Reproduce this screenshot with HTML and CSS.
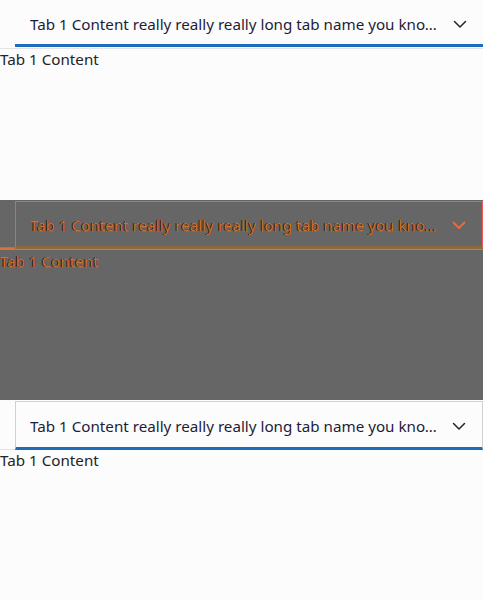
FILE: index.html
```html
<!DOCTYPE html>
<html>
<head>
<meta charset="utf-8">
<link rel="stylesheet" href="styles.css">
</head>
<body>
  <section class="panel">
    <div class="header">
      <div class="tab">
        <span class="label">Tab 1 Content really really really long tab name you know it is long</span>
        <svg class="chev" width="20" height="20" viewBox="0 0 20 20"><path d="M4.5 7.5 L10 13 L15.5 7.5" fill="none" stroke="currentColor" stroke-width="1.5" stroke-linecap="round" stroke-linejoin="round"/></svg>
      </div>
    </div>
    <div class="content">Tab 1 Content</div>
  </section>

  <section class="panel panel-diff">
    <div class="header header-boxed">
      <div class="tab tab-boxed">
        <span class="label">Tab 1 Content really really really long tab name you know it is long</span>
        <svg class="chev" width="20" height="20" viewBox="0 0 20 20"><path d="M4.5 7.5 L10 13 L15.5 7.5" fill="none" stroke="currentColor" stroke-width="1.8" stroke-linecap="round" stroke-linejoin="round"/></svg>
      </div>
    </div>
    <div class="content">Tab 1 Content</div>
  </section>

  <section class="panel">
    <div class="header header-boxed">
      <div class="tab tab-boxed">
        <span class="label">Tab 1 Content really really really long tab name you know it is long</span>
        <svg class="chev" width="20" height="20" viewBox="0 0 20 20"><path d="M4.5 7.5 L10 13 L15.5 7.5" fill="none" stroke="currentColor" stroke-width="1.5" stroke-linecap="round" stroke-linejoin="round"/></svg>
      </div>
    </div>
    <div class="content">Tab 1 Content</div>
  </section>
</body>
</html>
```

FILE: styles.css
```css
html, body {
  margin: 0;
  padding: 0;
  background: #fcfcfc;
}

body {
  font-family: "Noto Sans", "Open Sans", sans-serif;
  font-size: 15.2px;
  color: #242424;
}

.panel {
  height: 200px;
  display: flex;
  flex-direction: column;
  overflow: hidden;
  background: #fcfcfc;
}

.header {
  height: 48px;
  border-bottom: 1px solid #e3e3e3;
  display: flex;
  align-items: flex-start;
}

.header-boxed {
  height: 49px;
}

.tab {
  margin-left: 15px;
  flex: 1;
  min-width: 0;
  height: 47px;
  box-sizing: border-box;
  border-bottom: 3px solid #1f6cb8;
  display: flex;
  align-items: center;
  padding: 3px 13px 0 15px;
  color: #1c1c3a;
}

.tab-boxed {
  margin-top: 1px;
  height: 49px;
  border: 1px solid #d1d1d1;
  border-bottom: 3px solid #1f6cb8;
  padding-left: 14px;
  padding-top: 2px;
}

.label {
  flex: 1;
  min-width: 0;
  white-space: nowrap;
  overflow: hidden;
  text-overflow: ellipsis;
  line-height: 20px;
}

.chev {
  flex: none;
  margin-left: 9px;
  color: #242424;
}

.content {
  line-height: 21px;
  color: #242424;
}

/* diff overlay panel */
.panel-diff {
  background: #666666;
}

.panel-diff .header {
  height: 47px;
  border-bottom: 1px solid #e05a4a;
  box-shadow: 0 2px 0 0 #d9743f;
}

.panel-diff .tab-boxed {
  height: 48px;
  border: 1px solid #f05a50;
  border-bottom: 3px solid #8c6a3c;
}

.panel-diff .label,
.panel-diff .content {
  color: #c8742f;
  text-shadow: -1px 0 0 #26221e, 0.5px 0 0 rgba(40, 30, 24, 0.6), 0 0.5px 0 rgba(236, 72, 60, 0.5);
}

.panel-diff .content {
  margin-top: 3px;
}

.panel-diff .chev {
  color: #ef6a3c;
}
```
